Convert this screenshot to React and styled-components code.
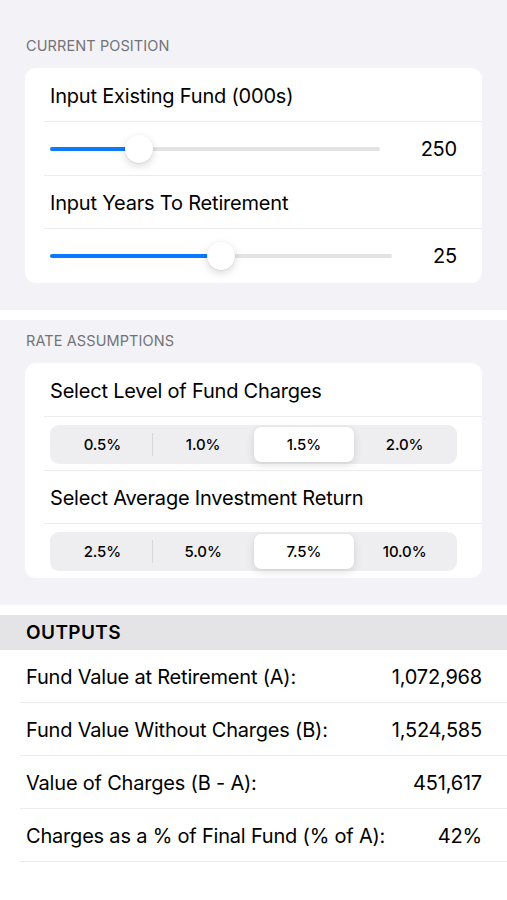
import styled, { createGlobalStyle } from "styled-components";

const GlobalStyle = createGlobalStyle`
  body {
    margin: 0;
    background: #ffffff;
    font-family: Inter, "Noto Sans", "Liberation Sans", sans-serif;
    color: #000;
  }
`;

const Page = styled.div`
  width: 507px;
  min-height: 900px;
  background: #ffffff;
  display: flex;
  flex-direction: column;
`;

const Group = styled.section`
  background: #f2f2f7;
  padding: ${(p) => (p.$first ? "37px" : "12px")} 25px 27px;
  margin-bottom: 10px;
`;

const GroupTitle = styled.h2`
  margin: 0 0 13px 1px;
  font-size: 14.5px;
  line-height: 18px;
  font-weight: 400;
  letter-spacing: 0.1px;
  color: #727277;
  text-transform: uppercase;
`;

const Card = styled.div`
  background: #ffffff;
  border-radius: 11px;
  overflow: hidden;
  padding-bottom: 1px;

  & > div + div::before {
    content: "";
    position: absolute;
    top: 0;
    left: 19px;
    right: 0;
    height: 1px;
    background: #ebebed;
  }
`;

const Row = styled.div`
  position: relative;
  height: ${(p) => p.$h || 53}px;
  box-sizing: border-box;
  display: flex;
  align-items: center;
  padding: 2px 25px 0;
  gap: 41px;
`;

const Label = styled.span`
  font-size: 20px;
  letter-spacing: -0.2px;
`;

const Track = styled.div`
  position: relative;
  flex: 1;
  height: 4px;
  border-radius: 2px;
  background: #e3e3e6;
`;

const Fill = styled.div`
  position: absolute;
  left: 0;
  top: 0;
  bottom: 0;
  border-radius: 2px;
  background: #0a7aff;
`;

const Thumb = styled.div`
  position: absolute;
  top: 50%;
  width: 28px;
  height: 28px;
  margin: -14px 0 0 -14px;
  border-radius: 50%;
  background: #ffffff;
  box-shadow: 0 3px 8px rgba(0, 0, 0, 0.15), 0 0.5px 1px rgba(0, 0, 0, 0.12);
`;

const Value = styled.span`
  font-size: 20px;
  letter-spacing: -0.2px;
`;

const Segmented = styled.div`
  flex: 1;
  display: flex;
  height: 39px;
  padding: 2px;
  box-sizing: border-box;
  border-radius: 9px;
  background: #eeeef0;
`;

const Segment = styled.div`
  position: relative;
  flex: 1;
  display: flex;
  align-items: center;
  justify-content: center;
  border-radius: 7px;
  font-size: 15px;
  font-weight: 500;
  letter-spacing: -0.1px;
  background: ${(p) => (p.$active ? "#ffffff" : "transparent")};
  box-shadow: ${(p) =>
    p.$active ? "0 3px 8px rgba(0,0,0,0.12), 0 0 1px rgba(0,0,0,0.08)" : "none"};

  &::after {
    content: "";
    position: absolute;
    right: 0;
    top: 6px;
    bottom: 6px;
    width: 1px;
    background: ${(p) => (p.$divider ? "#d6d6d9" : "transparent")};
  }
`;

const OutputsHeader = styled.h2`
  margin: 0;
  height: 35px;
  display: flex;
  align-items: center;
  padding: 0 26px;
  background: #e4e4e6;
  font-size: 19px;
  font-weight: 600;
  letter-spacing: 0.4px;
`;

const OutputRow = styled.div`
  height: 53px;
  box-sizing: border-box;
  margin-left: 20px;
  padding: 2px 25px 0 6px;
  display: flex;
  align-items: center;
  justify-content: space-between;
  border-bottom: 1px solid #ebebed;
  font-size: 20px;
  letter-spacing: -0.2px;
`;

function Slider({ value, min, max, label }) {
  const frac = (value - min) / (max - min);
  const pos = `calc(14px + ${frac} * (100% - 28px))`;
  return (
    <Row $h={54}>
      <Track>
        <Fill style={{ width: pos }} />
        <Thumb style={{ left: pos }} />
      </Track>
      <Value>{label}</Value>
    </Row>
  );
}

function Picker({ options, selected }) {
  return (
    <Row $h={54}>
      <Segmented>
        {options.map((o, i) => (
          <Segment
            key={o}
            $active={i === selected}
            $divider={i < options.length - 1 && i !== selected && i + 1 !== selected}
          >
            {o}
          </Segment>
        ))}
      </Segmented>
    </Row>
  );
}

const outputs = [
  ["Fund Value at Retirement (A):", "1,072,968"],
  ["Fund Value Without Charges (B):", "1,524,585"],
  ["Value of Charges (B - A):", "451,617"],
  ["Charges as a % of Final Fund (% of A):", "42%"],
];

export default function App() {
  return (
    <Page>
      <GlobalStyle />
      <Group $first>
        <GroupTitle>Current Position</GroupTitle>
        <Card>
          <Row>
            <Label>Input Existing Fund (000s)</Label>
          </Row>
          <Slider value={250} min={0} max={1000} label="250" />
          <Row>
            <Label>Input Years To Retirement</Label>
          </Row>
          <Slider value={25} min={0} max={50} label="25" />
        </Card>
      </Group>
      <Group>
        <GroupTitle>Rate Assumptions</GroupTitle>
        <Card>
          <Row>
            <Label>Select Level of Fund Charges</Label>
          </Row>
          <Picker options={["0.5%", "1.0%", "1.5%", "2.0%"]} selected={2} />
          <Row>
            <Label>Select Average Investment Return</Label>
          </Row>
          <Picker options={["2.5%", "5.0%", "7.5%", "10.0%"]} selected={2} />
        </Card>
      </Group>
      <OutputsHeader>OUTPUTS</OutputsHeader>
      {outputs.map(([k, v]) => (
        <OutputRow key={k}>
          <span>{k}</span>
          <span>{v}</span>
        </OutputRow>
      ))}
    </Page>
  );
}
